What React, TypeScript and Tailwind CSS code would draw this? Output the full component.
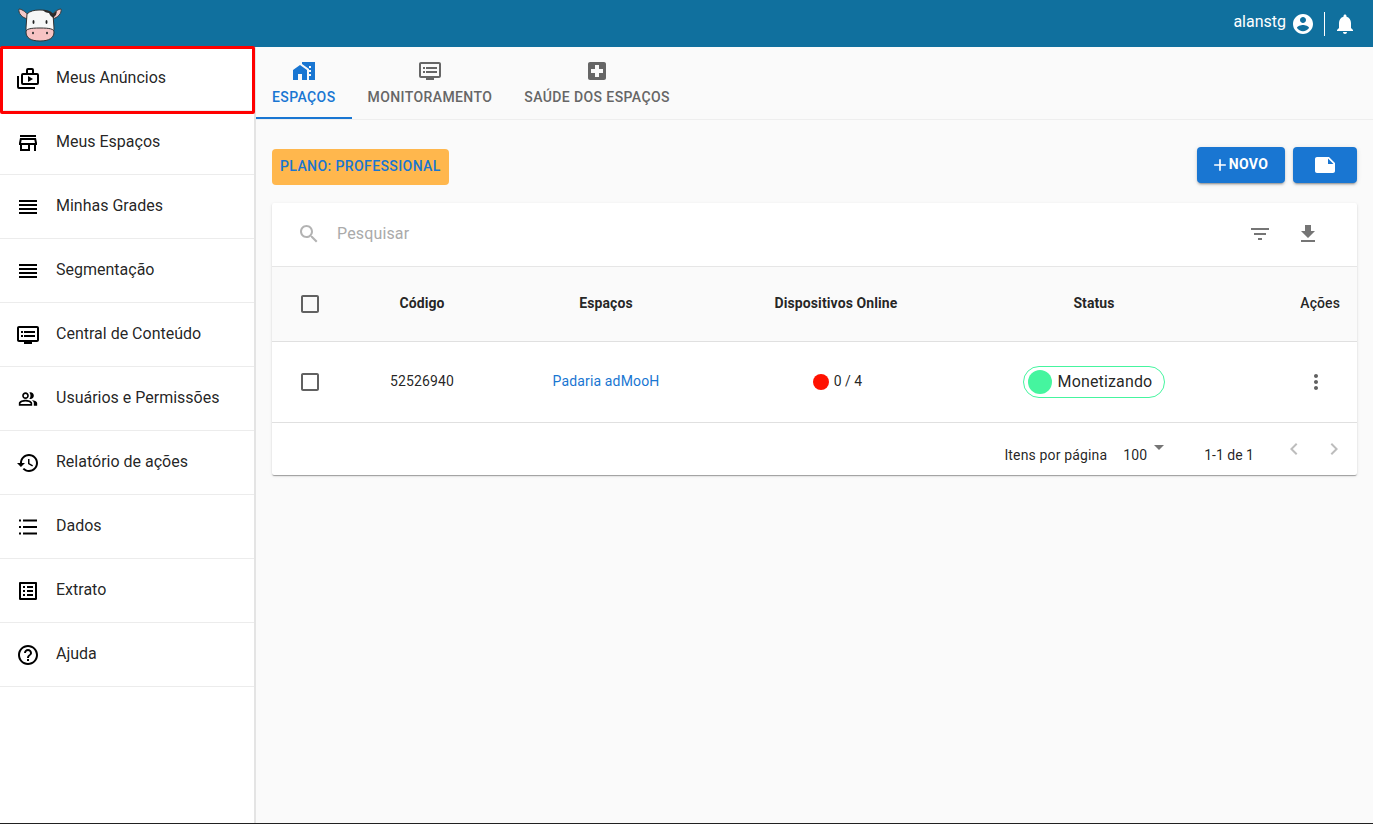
import React from 'react';

const Icon: React.FC<{ d: string | string[]; className?: string }> = ({ d, className = 'w-6 h-6' }) => (
  <svg viewBox="0 0 24 24" fill="currentColor" className={className}>
    {(Array.isArray(d) ? d : [d]).map((p, i) => (
      <path key={i} d={p} />
    ))}
  </svg>
);

const icons = {
  store: 'M18.36 9l.6 3H5.04l.6-3h12.72M20 4H4v2h16V4zm0 3H4l-1 5v2h1v6h10v-6h4v6h2v-6h1v-2l-1-5zM6 18v-4h6v4H6z',
  headline: 'M3 15h18v-2H3v2zm0 4h18v-2H3v2zm0-8h18V9H3v2zm0-6v2h18V5H3z',
  dvr: 'M21 3H3c-1.1 0-2 .9-2 2v12c0 1.1.9 2 2 2h5v2h8v-2h5c1.1 0 1.99-.9 1.99-2L23 5c0-1.1-.9-2-2-2zm0 14H3V5h18v12zm-2-9H8v2h11V8zm0 4H8v2h11v-2zM7 8H5v2h2V8zm0 4H5v2h2v-2z',
  people: [
    'M16.67 13.13C18.04 14.06 19 15.32 19 17v3h4v-3c0-2.18-3.57-3.47-6.33-3.87z',
    'M9 12c2.21 0 4-1.79 4-4s-1.79-4-4-4-4 1.79-4 4 1.79 4 4 4zm0-6c1.1 0 2 .9 2 2s-.9 2-2 2-2-.9-2-2 .9-2 2-2z',
    'M15 12c2.21 0 4-1.79 4-4s-1.79-4-4-4c-.47 0-.91.1-1.33.24C14.5 5.27 15 6.58 15 8s-.5 2.73-1.33 3.76c.42.14.86.24 1.33.24z',
    'M9 13c-2.67 0-8 1.34-8 4v3h16v-3c0-2.66-5.33-4-8-4zm6 5H3v-.99C3.2 16.29 6.3 15 9 15s5.8 1.29 6 2v1z',
  ],
  history: 'M13 3c-4.97 0-9 4.03-9 9H1l3.89 3.89.07.14L9 12H6c0-3.87 3.13-7 7-7s7 3.13 7 7-3.13 7-7 7c-1.93 0-3.68-.79-4.94-2.06l-1.42 1.42C8.27 19.99 10.51 21 13 21c4.97 0 9-4.03 9-9s-4.03-9-9-9zm-1 5v5l4.28 2.54.72-1.21-3.5-2.08V8H12z',
  bullets: 'M3 4.5h2v2H3zM3 11h2v2H3zM3 17.5h2v2H3zM7 17.5h14v2H7zM7 11h14v2H7zM7 4.5h14v2H7z',
  listAlt: 'M19 5v14H5V5h14m1.1-2H3.9c-.5 0-.9.4-.9.9v16.2c0 .4.4.9.9.9h16.2c.4 0 .9-.5.9-.9V3.9c0-.5-.5-.9-.9-.9zM11 7h6v2h-6V7zm0 4h6v2h-6v-2zm0 4h6v2h-6zM7 7h2v2H7zm0 4h2v2H7zm0 4h2v2H7z',
  help: 'M11 18h2v-2h-2v2zm1-16C6.48 2 2 6.48 2 12s4.48 10 10 10 10-4.48 10-10S17.52 2 12 2zm0 18c-4.41 0-8-3.59-8-8s3.59-8 8-8 8 3.59 8 8-3.59 8-8 8zm0-14c-2.21 0-4 1.79-4 4h2c0-1.1.9-2 2-2s2 .9 2 2c0 2-3 1.75-3 5h2c0-2.25 3-2.5 3-5 0-2.21-1.79-4-4-4z',
  account: 'M12 2C6.48 2 2 6.48 2 12s4.48 10 10 10 10-4.48 10-10S17.52 2 12 2zm0 3c1.66 0 3 1.34 3 3s-1.34 3-3 3-3-1.34-3-3 1.34-3 3-3zm0 14.2c-2.5 0-4.71-1.28-6-3.22.03-1.99 4-3.08 6-3.08 1.99 0 5.97 1.09 6 3.08-1.29 1.94-3.5 3.22-6 3.22z',
  bell: 'M12 22c1.1 0 2-.9 2-2h-4c0 1.1.89 2 2 2zm6-6v-5c0-3.07-1.64-5.64-4.5-6.32V4c0-.83-.67-1.5-1.5-1.5s-1.5.67-1.5 1.5v.68C7.63 5.36 6 7.92 6 11v5l-2 2v1h16v-1l-2-2z',
  hospital: 'M19 3H5c-1.1 0-1.99.9-1.99 2L3 19c0 1.1.9 2 2 2h14c1.1 0 2-.9 2-2V5c0-1.1-.9-2-2-2zm-1 11h-4v4h-4v-4H6v-4h4V6h4v4h4v4z',
  homeWork: ['M1 11v10h5v-6h4v6h5V11L8 6z', 'M10 3v1.97l7 5V11h2v2h-2v2h2v2h-2v4h6V3H10zm9 6h-2V7h2v2z'],
  note: 'M22 10l-6-6H4c-1.1 0-2 .9-2 2v12.01c0 1.1.9 1.99 2 1.99l16-.01c1.1 0 2-.89 2-1.99v-8zm-7-4.5l5.5 5.5H15V5.5z',
  filter: 'M10 18h4v-2h-4v2zM3 6v2h18V6H3zm3 7h12v-2H6v2z',
  download: 'M19 9h-4V3H9v6H5l7 7 7-7zM5 18v2h14v-2H5z',
  search: 'M15.5 14h-.79l-.28-.27C15.41 12.59 16 11.11 16 9.5 16 5.91 13.09 3 9.5 3S3 5.91 3 9.5 5.91 16 9.5 16c1.61 0 3.09-.59 4.23-1.57l.27.28v.79l5 4.99L20.49 19l-4.99-5zm-6 0C7.01 14 5 11.99 5 9.5S7.01 5 9.5 5 14 7.01 14 9.5 11.99 14 9.5 14z',
  checkbox: 'M19 5v14H5V5h14m0-2H5c-1.1 0-2 .9-2 2v14c0 1.1.9 2 2 2h14c1.1 0 2-.9 2-2V5c0-1.1-.9-2-2-2z',
  more: 'M12 8c1.1 0 2-.9 2-2s-.9-2-2-2-2 .9-2 2 .9 2 2 2zm0 2c-1.1 0-2 .9-2 2s.9 2 2 2 2-.9 2-2-.9-2-2-2zm0 6c-1.1 0-2 .9-2 2s.9 2 2 2 2-.9 2-2-.9-2-2-2z',
  left: 'M15.41 7.41L14 6l-6 6 6 6 1.41-1.41L10.83 12z',
  right: 'M10 6L8.59 7.41 13.17 12l-4.58 4.58L10 18l6-6z',
  dropDown: 'M7 10l5 5 5-5z',
  add: 'M19 13h-6v6h-2v-6H5v-2h6V5h2v6h6v2z',
};

// briefcase with play button, not a stock icon
const AdsIcon = () => (
  <svg viewBox="0 0 24 24" fill="currentColor" className="w-6 h-6">
    <path
      fillRule="evenodd"
      d="M10 6V3a2 2 0 0 1 2-2h4a2 2 0 0 1 2 2v3h3a2 2 0 0 1 2 2v8a2 2 0 0 1-2 2H7a2 2 0 0 1-2-2V8a2 2 0 0 1 2-2h3zM12 3v3h4V3h-4zM7 8v8h14V8H7z"
    />
    <path d="M12 9v6l5-3z" />
    <path d="M1 9h2v11h16v2H3a2 2 0 0 1-2-2V9z" />
  </svg>
);

const CowLogo = () => (
  <svg viewBox="0 0 44 36" className="w-11 h-9">
    {/* ears */}
    <path d="M10 9C7 5 3 3 1 3c-1 4 3 9 9 10z" fill="#f4c9c9" stroke="#3a3a3a" strokeWidth="1" />
    <path d="M34 9c3-4 7-6 9-6 1 4-3 9-9 10z" fill="#f4c9c9" stroke="#3a3a3a" strokeWidth="1" />
    {/* head */}
    <path d="M9 8c3-3 7-4 13-4s10 1 13 4l1 14c0 5-3 8-14 8S8 27 8 22z" fill="#f7f7f7" stroke="#333" strokeWidth="1" />
    {/* patches */}
    <path d="M25 4c4 0 8 1 10 4l1 4c-3-1-4-3-5-5-2 0-5-1-6-3z" fill="#2b2b2b" />
    <path d="M34 9c1-2 3-3 5-4l-1 4-3 3z" fill="#2b2b2b" />
    {/* eyes */}
    <ellipse cx="15.5" cy="16" rx="1" ry="2" fill="#222" />
    <ellipse cx="28.5" cy="16" rx="1" ry="2" fill="#222" />
    {/* muzzle */}
    <path d="M8 26c0-3 4-4 14-4s14 1 14 4c0 6-5 9-14 9S8 32 8 26z" fill="#f7c3c3" stroke="#333" strokeWidth="1" />
    <ellipse cx="15" cy="27" rx="1" ry="1.2" fill="#333" />
    <ellipse cx="29" cy="27" rx="1" ry="1.2" fill="#333" />
  </svg>
);

const navItems: { label: string; icon: React.ReactNode }[] = [
  { label: 'Meus Anúncios', icon: <AdsIcon /> },
  { label: 'Meus Espaços', icon: <Icon d={icons.store} /> },
  { label: 'Minhas Grades', icon: <Icon d={icons.headline} /> },
  { label: 'Segmentação', icon: <Icon d={icons.headline} /> },
  { label: 'Central de Conteúdo', icon: <Icon d={icons.dvr} /> },
  { label: 'Usuários e Permissões', icon: <Icon d={icons.people} className="w-5 h-5 ml-[2px]" /> },
  { label: 'Relatório de ações', icon: <Icon d={icons.history} /> },
  { label: 'Dados', icon: <Icon d={icons.bullets} /> },
  { label: 'Extrato', icon: <Icon d={icons.listAlt} /> },
  { label: 'Ajuda', icon: <Icon d={icons.help} /> },
];

const tabs = [
  { label: 'Espaços', icon: icons.homeWork, active: true },
  { label: 'Monitoramento', icon: icons.dvr, active: false },
  { label: 'Saúde dos Espaços', icon: icons.hospital, active: false },
];

const rowGrid = 'grid grid-cols-[76px_148px_220px_240px_276px_125px] items-center';

export default function App() {
  return (
    <div className="relative h-[824px] w-full overflow-hidden flex flex-col bg-[#fafafa] border-b border-[#212121] font-['Roboto',sans-serif] text-[rgba(0,0,0,0.87)]">
      <header className="h-[47px] shrink-0 bg-[#10709e] flex items-center justify-between pl-[18px] pr-[16px] text-white">
        <CowLogo />
        <div className="flex items-center">
          <span className="text-base -mt-[3px]">alanstg</span>
          <Icon d={icons.account} className="w-6 h-6 ml-[5px]" />
          <div className="w-px h-6 bg-white ml-[9px] mr-2" />
          <Icon d={icons.bell} className="w-6 h-6" />
        </div>
      </header>

      <div className="flex flex-1 min-h-0">
        <aside className="relative w-[256px] shrink-0 bg-white border-r-2 border-[#e4e4e4]">
          {navItems.map((item) => (
            <div key={item.label} className="h-16 flex items-center pl-4 border-b border-[#ececec] text-[rgba(0,0,0,0.87)]">
              <span className="w-10 text-black">{item.icon}</span>
              <span className="text-base -mt-[2px]">{item.label}</span>
            </div>
          ))}
          {/* highlight around the first entry */}
          <div className="absolute left-0 -top-px w-[255px] h-[68px] border-[3px] border-[#ff0000] rounded-[2px] pointer-events-none" />
        </aside>

        <main className="flex-1 min-w-0 flex flex-col">
          <nav className="h-[73px] shrink-0 flex border-b border-[#eeeeee]">
            {tabs.map((tab) => (
              <div
                key={tab.label}
                className={`px-4 flex flex-col items-center pt-3 border-b-2 text-sm font-medium uppercase tracking-[0.4px] ${
                  tab.active ? 'border-[#1976d2] text-[#1976d2]' : 'border-transparent text-[#666666]'
                }`}
              >
                <Icon d={tab.icon} className="w-6 h-6" />
                <span className="mt-1 leading-5">{tab.label}</span>
              </div>
            ))}
          </nav>

          <div className="pl-4 pr-4 pt-[27px]">
            <div className="flex items-start justify-between">
              <div className="mt-[2px] h-9 px-2 pb-[2px] flex items-center rounded bg-[#ffb74d] text-[#1976d2] text-sm font-medium uppercase tracking-[0.4px]">
                Plano: Professional
              </div>
              <div className="flex gap-2">
                <button className="h-9 w-[88px] pr-1 rounded bg-[#1976d2] text-white flex items-center justify-center text-sm font-bold uppercase tracking-[0.4px] shadow-[0_3px_1px_-2px_rgba(0,0,0,0.2),0_2px_2px_0_rgba(0,0,0,0.14),0_1px_5px_0_rgba(0,0,0,0.12)]">
                  <Icon d={icons.add} className="w-5 h-5" />
                  <span className="-mt-[2px] -ml-px">Novo</span>
                </button>
                <button className="h-9 w-16 rounded bg-[#1976d2] text-white flex items-center justify-center shadow-[0_3px_1px_-2px_rgba(0,0,0,0.2),0_2px_2px_0_rgba(0,0,0,0.14),0_1px_5px_0_rgba(0,0,0,0.12)]">
                  <Icon d={icons.note} className="w-6 h-6" />
                </button>
              </div>
            </div>

            <section className="mt-[18px] bg-white rounded-[2px] shadow-[0_2px_1px_-1px_rgba(0,0,0,0.2),0_1px_1px_0_rgba(0,0,0,0.14),0_1px_3px_0_rgba(0,0,0,0.12)]">
              <div className="h-[64px] flex items-center pb-[2px] pl-[25px] pr-[37px] border-b border-[#e6e6e6]">
                <Icon d={icons.search} className="w-6 h-6 text-[#b3b3b3]" />
                <span className="ml-[16px] text-base tracking-[0.15px] text-[#aaaaaa]">Pesquisar</span>
                <div className="ml-auto flex items-center gap-6 text-[#757575]">
                  <Icon d={icons.filter} />
                  <Icon d={icons.download} />
                </div>
              </div>

              <div className={`${rowGrid} h-[75px] bg-[#fafafa] border-b border-[#e0e0e0] text-sm font-bold tracking-[0.1px] pb-[3px]`}>
                <div className="pl-[26px] pt-[2px] text-[#616161]">
                  <Icon d={icons.checkbox} />
                </div>
                <div className="text-center">Código</div>
                <div className="text-center">Espaços</div>
                <div className="text-center">Dispositivos Online</div>
                <div className="text-center">Status</div>
                <div className="text-right pr-[17px] font-medium">Ações</div>
              </div>

              <div className={`${rowGrid} h-[81px] border-b border-[#e0e0e0] text-sm`}>
                <div className="pl-[26px] text-[#616161]">
                  <Icon d={icons.checkbox} />
                </div>
                <div className="text-center tracking-[0.15px] pb-[2px]">52526940</div>
                <div className="text-center text-[#1976d2] tracking-[0.15px] pb-[2px]">Padaria adMooH</div>
                <div className="flex items-center justify-center gap-[5px] pl-[3px]">
                  <span className="w-4 h-4 rounded-full bg-[#ff1100]" />
                  <span className="pb-[2px]">0 / 4</span>
                </div>
                <div className="flex justify-center">
                  <div className="h-8 flex items-center pl-1 pr-3 rounded-full border border-[#45f59f] bg-white">
                    <span className="w-6 h-6 rounded-full bg-[#45f59f]" />
                    <span className="ml-[6px] text-base tracking-[0.15px]">Monetizando</span>
                  </div>
                </div>
                <div className="pl-[72px] text-[#616161]">
                  <Icon d={icons.more} />
                </div>
              </div>

              <div className="h-[52px] flex items-start justify-end text-sm">
                <span className="mt-[22px] tracking-[0.15px]">Itens por página</span>
                <span className="mt-[22px] ml-4 tracking-[0.15px]">100</span>
                <Icon d={icons.dropDown} className="w-6 h-6 mt-[12px] text-[#757575]" />
                <span className="mt-[22px] ml-[33px]">1-1 de 1</span>
                <div className="flex gap-4 ml-7 mr-[11px] mt-[14px] text-[#bdbdbd]">
                  <Icon d={icons.left} />
                  <Icon d={icons.right} />
                </div>
              </div>
            </section>
          </div>
        </main>
      </div>
    </div>
  );
}
